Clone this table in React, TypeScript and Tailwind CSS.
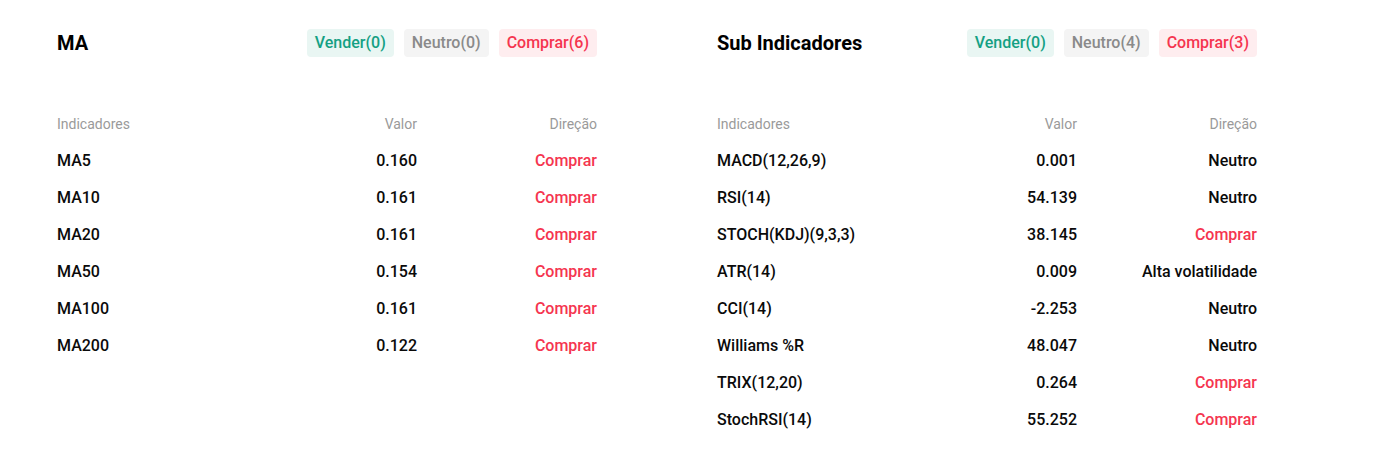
import React from "react";

type Row = { name: string; value: string; dir: string; tone: "buy" | "neutral" };

const maRows: Row[] = [
  { name: "MA5", value: "0.160", dir: "Comprar", tone: "buy" },
  { name: "MA10", value: "0.161", dir: "Comprar", tone: "buy" },
  { name: "MA20", value: "0.161", dir: "Comprar", tone: "buy" },
  { name: "MA50", value: "0.154", dir: "Comprar", tone: "buy" },
  { name: "MA100", value: "0.161", dir: "Comprar", tone: "buy" },
  { name: "MA200", value: "0.122", dir: "Comprar", tone: "buy" },
];

const subRows: Row[] = [
  { name: "MACD(12,26,9)", value: "0.001", dir: "Neutro", tone: "neutral" },
  { name: "RSI(14)", value: "54.139", dir: "Neutro", tone: "neutral" },
  { name: "STOCH(KDJ)(9,3,3)", value: "38.145", dir: "Comprar", tone: "buy" },
  { name: "ATR(14)", value: "0.009", dir: "Alta volatilidade", tone: "neutral" },
  { name: "CCI(14)", value: "-2.253", dir: "Neutro", tone: "neutral" },
  { name: "Williams %R", value: "48.047", dir: "Neutro", tone: "neutral" },
  { name: "TRIX(12,20)", value: "0.264", dir: "Comprar", tone: "buy" },
  { name: "StochRSI(14)", value: "55.252", dir: "Comprar", tone: "buy" },
];

function Panel({ title, counts, rows }: { title: string; counts: [number, number, number]; rows: Row[] }) {
  return (
    <div className="w-[540px] shrink-0">
      <div className="flex items-center justify-between h-[28px]">
        <div className="text-[20px] font-bold text-black leading-[28px]">{title}</div>
        <div className="flex items-center gap-[10px]">
          <span className="h-[28px] px-[8px] rounded-[4px] bg-[#e9f6f3] text-[#14a083] text-[16px] font-medium leading-[28px]">
            Vender({counts[0]})
          </span>
          <span className="h-[28px] px-[8px] rounded-[4px] bg-[#f4f4f4] text-[#8a8a8a] text-[16px] font-medium leading-[28px]">
            Neutro({counts[1]})
          </span>
          <span className="h-[28px] px-[8px] rounded-[4px] bg-[#feedef] text-[#f5354f] text-[16px] font-medium leading-[28px]">
            Comprar({counts[2]})
          </span>
        </div>
      </div>
      <div className="mt-[49px]">
        <div className="grid grid-cols-3 h-[36px] items-center text-[14px] text-[#9a9a9a]">
          <div>Indicadores</div>
          <div className="text-right">Valor</div>
          <div className="text-right">Direção</div>
        </div>
        {rows.map((r) => (
          <div key={r.name} className="grid grid-cols-3 h-[37px] items-center text-[16px] font-medium text-[#0a0a0a]">
            <div>{r.name}</div>
            <div className="text-right">{r.value}</div>
            <div className={"text-right " + (r.tone === "buy" ? "text-[#f5354f]" : "text-[#0a0a0a]")}>{r.dir}</div>
          </div>
        ))}
      </div>
    </div>
  );
}

export default function App() {
  return (
    <div className="w-[1375px] h-[462px] bg-white pt-[29px] px-[57px] flex gap-[120px]" style={{ fontFamily: "Roboto, 'Noto Sans', sans-serif" }}>
      <Panel title="MA" counts={[0, 0, 6]} rows={maRows} />
      <Panel title="Sub Indicadores" counts={[0, 4, 3]} rows={subRows} />
    </div>
  );
}
